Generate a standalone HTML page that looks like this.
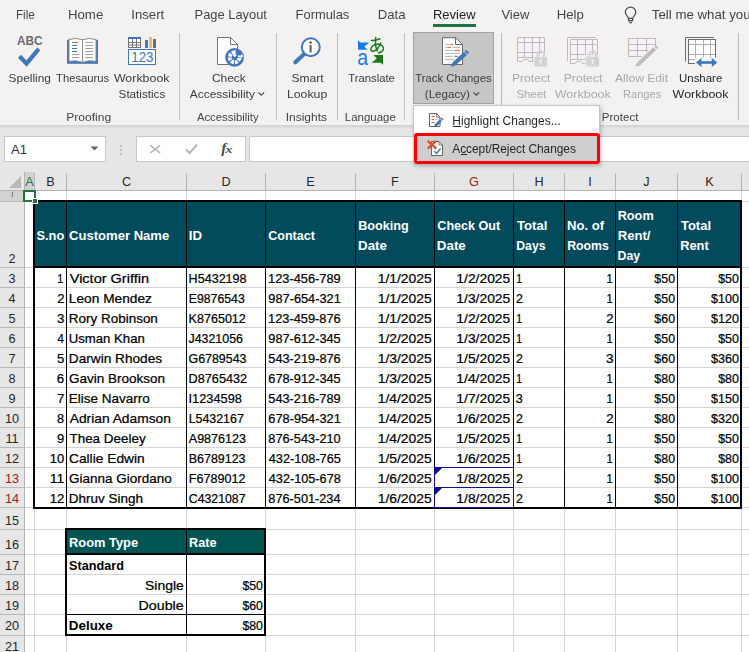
<!DOCTYPE html>
<html><head><meta charset="utf-8"><title>Excel</title>
<style>
*{box-sizing:border-box;margin:0;padding:0}
html,body{width:749px;height:652px;overflow:hidden}
body{position:relative;background:#f3f2f1;font-family:"Liberation Sans",sans-serif;color:#262626}
.abs{position:absolute}
.sep{position:absolute;top:33px;width:1px;height:87px;background:#bcbcbc}
.ch{position:absolute;top:172px;height:18px;font-size:12.700px;line-height:20px;text-align:center;color:#262626}
.rh{position:absolute;left:0;width:24px;font-size:12.700px;text-align:center;color:#262626;line-height:14px;height:14px}
.vl{position:absolute;width:1px;background:#d4d4d4}
.hl{position:absolute;height:1px;background:#d4d4d4}
.bk{position:absolute;background:#000}
</style></head><body>

<div class="abs" style="left:0;top:0;width:749px;height:126px;background:#f3f2f1"></div>
<div class="abs" style="left:0;top:125px;width:749px;height:4px;background:linear-gradient(#d0d0d0,#e6e6e6)"></div>
<div class="abs" style="left:0;top:129px;width:749px;height:43px;background:#e6e6e6"></div>
<svg class="abs" style="left:0;top:0;z-index:5;will-change:transform" width="749" height="130" viewBox="0 0 749 130" font-family="Liberation Sans">
<text x="15.9" y="19" font-size="13.1" fill="#444" font-weight="normal" textLength="18.9" lengthAdjust="spacingAndGlyphs">File</text>
<text x="67.9" y="19" font-size="13.1" fill="#444" font-weight="normal" textLength="35.4" lengthAdjust="spacingAndGlyphs">Home</text>
<text x="131.3" y="19" font-size="13.1" fill="#444" font-weight="normal" textLength="32.9" lengthAdjust="spacingAndGlyphs">Insert</text>
<text x="194.6" y="19" font-size="13.1" fill="#444" font-weight="normal" textLength="72.3" lengthAdjust="spacingAndGlyphs">Page Layout</text>
<text x="295.6" y="19" font-size="13.1" fill="#444" font-weight="normal" textLength="53.7" lengthAdjust="spacingAndGlyphs">Formulas</text>
<text x="377.7" y="19" font-size="13.1" fill="#444" font-weight="normal" textLength="27.8" lengthAdjust="spacingAndGlyphs">Data</text>
<text x="433.0" y="19" font-size="13.1" fill="#222" font-weight="normal" textLength="42.5" lengthAdjust="spacingAndGlyphs">Review</text>
<text x="501.4" y="19" font-size="13.1" fill="#444" font-weight="normal" textLength="27.9" lengthAdjust="spacingAndGlyphs">View</text>
<text x="556.7" y="19" font-size="13.1" fill="#444" font-weight="normal" textLength="27.1" lengthAdjust="spacingAndGlyphs">Help</text>
<text x="651.8" y="19" font-size="13.1" fill="#444" font-weight="normal" textLength="98.8" lengthAdjust="spacingAndGlyphs">Tell me what you</text>
<text x="8.6" y="82" font-size="11.6" fill="#3b3b3b" font-weight="normal" textLength="42.4" lengthAdjust="spacingAndGlyphs">Spelling</text>
<text x="56.1" y="82" font-size="11.6" fill="#3b3b3b" font-weight="normal" textLength="53.0" lengthAdjust="spacingAndGlyphs">Thesaurus</text>
<text x="113.9" y="82" font-size="11.6" fill="#3b3b3b" font-weight="normal" textLength="55.6" lengthAdjust="spacingAndGlyphs">Workbook</text>
<text x="118.6" y="98" font-size="11.6" fill="#3b3b3b" font-weight="normal" textLength="46.7" lengthAdjust="spacingAndGlyphs">Statistics</text>
<text x="211.9" y="82" font-size="11.6" fill="#3b3b3b" font-weight="normal" textLength="33.8" lengthAdjust="spacingAndGlyphs">Check</text>
<text x="189.7" y="98" font-size="11.6" fill="#3b3b3b" font-weight="normal" textLength="65.2" lengthAdjust="spacingAndGlyphs">Accessibility</text>
<text x="291.4" y="82" font-size="11.6" fill="#3b3b3b" font-weight="normal" textLength="32.2" lengthAdjust="spacingAndGlyphs">Smart</text>
<text x="286.9" y="98" font-size="11.6" fill="#3b3b3b" font-weight="normal" textLength="40.4" lengthAdjust="spacingAndGlyphs">Lookup</text>
<text x="348.2" y="82" font-size="11.6" fill="#3b3b3b" font-weight="normal" textLength="46.7" lengthAdjust="spacingAndGlyphs">Translate</text>
<text x="415.3" y="82" font-size="11.6" fill="#3b3b3b" font-weight="normal" textLength="76.3" lengthAdjust="spacingAndGlyphs">Track Changes</text>
<text x="424.8" y="98" font-size="11.6" fill="#3b3b3b" font-weight="normal" textLength="45.1" lengthAdjust="spacingAndGlyphs">(Legacy)</text>
<text x="511.9" y="82" font-size="11.6" fill="#a9a9a9" font-weight="normal" textLength="38.5" lengthAdjust="spacingAndGlyphs">Protect</text>
<text x="516.4" y="98" font-size="11.6" fill="#a9a9a9" font-weight="normal" textLength="29.8" lengthAdjust="spacingAndGlyphs">Sheet</text>
<text x="563.7" y="82" font-size="11.6" fill="#a9a9a9" font-weight="normal" textLength="38.7" lengthAdjust="spacingAndGlyphs">Protect</text>
<text x="554.8" y="98" font-size="11.6" fill="#a9a9a9" font-weight="normal" textLength="56.0" lengthAdjust="spacingAndGlyphs">Workbook</text>
<text x="614.9" y="82" font-size="11.6" fill="#a9a9a9" font-weight="normal" textLength="53.3" lengthAdjust="spacingAndGlyphs">Allow Edit</text>
<text x="622.9" y="98" font-size="11.6" fill="#a9a9a9" font-weight="normal" textLength="38.4" lengthAdjust="spacingAndGlyphs">Ranges</text>
<text x="679.0" y="82" font-size="11.6" fill="#262626" font-weight="normal" textLength="43.3" lengthAdjust="spacingAndGlyphs">Unshare</text>
<text x="672.6" y="98" font-size="11.6" fill="#262626" font-weight="normal" textLength="55.9" lengthAdjust="spacingAndGlyphs">Workbook</text>
<text x="66.2" y="121" font-size="11.6" fill="#444" font-weight="normal" textLength="44.9" lengthAdjust="spacingAndGlyphs">Proofing</text>
<text x="196.9" y="121" font-size="11.6" fill="#444" font-weight="normal" textLength="61.7" lengthAdjust="spacingAndGlyphs">Accessibility</text>
<text x="285.7" y="121" font-size="11.6" fill="#444" font-weight="normal" textLength="41.3" lengthAdjust="spacingAndGlyphs">Insights</text>
<text x="344.8" y="121" font-size="11.6" fill="#444" font-weight="normal" textLength="51.0" lengthAdjust="spacingAndGlyphs">Language</text>
<text x="601.8" y="121" font-size="11.6" fill="#444" font-weight="normal" textLength="36.6" lengthAdjust="spacingAndGlyphs">Protect</text>
<path d="M258.5 92.300L261.3 95.100L264.1 92.300" fill="none" stroke="#444" stroke-width="1.100"/>
<path d="M473.5 92.300L476.3 95.100L479.1 92.300" fill="none" stroke="#444" stroke-width="1.100"/>
</svg>
<div class="abs" style="left:433px;top:24px;width:43px;height:2.500px;background:#217346"></div>
<svg class="abs" style="left:620px;top:0px" width="22" height="28" viewBox="620 0 22 28"><path d="M628.500 18.400C628.500 16.300 625.300 15.600 625.300 12.300A5.250 5.250 0 0 1 635.800 12.300C635.800 15.600 632.700 16.300 632.700 18.400z M628.500 18.400V20.700H632.700V18.400 M629.200 22.500H631.900" fill="none" stroke="#484848" stroke-width="1.250"/></svg>
<div class="sep" style="left:179px"></div>
<div class="sep" style="left:276px"></div>
<div class="sep" style="left:337px"></div>
<div class="sep" style="left:404px"></div>
<div class="sep" style="left:501px"></div>
<div class="sep" style="left:738px"></div>
<div class="abs" style="left:413px;top:32px;width:81px;height:72px;background:#c8c6c4;border:1px solid #a3a3a3"></div>
<svg class="abs" style="left:0;top:0" width="749" height="130" viewBox="0 0 749 130">
<text x="17" y="45.2" font-family="Liberation Sans" font-size="12.6" font-weight="bold" fill="#6b6b6b" textLength="25.5" lengthAdjust="spacingAndGlyphs">ABC</text>
<path d="M19.500 56.300L26.500 63.500L38.800 48.800" fill="none" stroke="#3e78b8" stroke-width="4.200"/>
<rect x="67" y="39.8" width="31" height="24" fill="#3e78b8"/>
<path d="M69 39.5Q76 37.2 82.500 39.8Q89 37.2 96 39.500V61.300Q89 59.800 82.500 62.300Q76 59.800 69 61.300z" fill="#fff" stroke="#8a8a8a" stroke-width="1"/>
<path d="M82.500 39.800V62" stroke="#8a8a8a" stroke-width="1"/>
<path d="M72 42.4h6" stroke="#d9532c" stroke-width="1"/>
<path d="M85.300 42.4h7.500" stroke="#9a9a9a" stroke-width="1"/>
<path d="M72 45.4h5" stroke="#3e78b8" stroke-width="1"/>
<path d="M85.300 45.4h7.500" stroke="#9a9a9a" stroke-width="1"/>
<path d="M72 48.5h5" stroke="#3e78b8" stroke-width="1"/>
<path d="M85.300 48.5h7.500" stroke="#9a9a9a" stroke-width="1"/>
<path d="M72 51.5h5" stroke="#3e78b8" stroke-width="1"/>
<path d="M85.300 51.5h7.500" stroke="#9a9a9a" stroke-width="1"/>
<path d="M72 54.6h7.4" stroke="#9a9a9a" stroke-width="1"/>
<path d="M85.300 54.6h7.500" stroke="#9a9a9a" stroke-width="1"/>
<path d="M72 57.6h7.4" stroke="#9a9a9a" stroke-width="1"/>
<path d="M85.300 57.6h7.500" stroke="#9a9a9a" stroke-width="1"/>
<rect x="128.500" y="37.500" width="12" height="10" fill="#fff" stroke="#777" stroke-width="1"/>
<rect x="128" y="37" width="13" height="2" fill="#3e78b8"/>
<path d="M128 42.500h13M128 45h13M132.500 39v9M136.500 39v9" stroke="#777" stroke-width="1" fill="none"/>
<rect x="145" y="40" width="3" height="8" fill="#3e78b8"/>
<rect x="149" y="37" width="3" height="11" fill="#e9b96e"/>
<rect x="153" y="39" width="3" height="9" fill="#6b6b6b"/>
<rect x="128.500" y="49.500" width="27" height="15" fill="#fff" stroke="#3e78b8" stroke-width="1"/>
<text x="131.300" y="62" font-family="Liberation Sans" font-size="13.800" fill="#3e78b8" textLength="22.200" lengthAdjust="spacingAndGlyphs">123</text>
<path d="M217.500 37.500H230.500L237.500 44.500V64.500H217.500z" fill="#fff" stroke="#727272" stroke-width="1"/>
<path d="M230.500 37.500V44.500H237.500" fill="none" stroke="#727272" stroke-width="1"/>
<circle cx="234.600" cy="57.400" r="9.400" fill="#3e78b8"/>
<circle cx="234.600" cy="57.400" r="4.900" fill="none" stroke="#fff" stroke-width="3.800" stroke-dasharray="2.850 0.998" stroke-dashoffset="-0.500"/>
<path d="M234.600 57.400V49.400A8 8 0 0 1 242.600 57.400z" fill="#3e78b8"/>
<circle cx="234.600" cy="57.400" r="2.600" fill="#3e78b8"/>
<path d="M234.700 50.300V55.500" stroke="#fff" stroke-width="2"/><path d="M232.400 54.800H237L234.700 57.300z" fill="#fff"/>
<path d="M238 56.300H241.500" stroke="#fff" stroke-width="1.600"/><path d="M241 53.800V58.800L243.500 56.300z" fill="#fff"/>
<path d="M304.500 53.800L295.300 62.300" stroke="#3e78b8" stroke-width="4" stroke-linecap="round"/>
<circle cx="310.800" cy="47.200" r="9" fill="#fff" stroke="#3e78b8" stroke-width="2"/>
<circle cx="310.600" cy="42.600" r="1.300" fill="#5a5a5a"/>
<path d="M310.600 45V52.300" stroke="#5a5a5a" stroke-width="2"/>
<path d="M358 40.300V49.800H367.700L364.300 46.400L369.400 42.500H360.500z" fill="#1a7ae0"/>
<text x="357.300" y="64.500" font-family="Liberation Sans" font-size="22.500" fill="#1a7ae0" textLength="10.800" lengthAdjust="spacingAndGlyphs">a</text>
<path d="M383 64.700V55H373.400L376.800 58.600L371.400 62.700H380.600z" fill="#1a7a1a"/>
<g fill="none" stroke="#1a7a1a" stroke-width="1.500" stroke-linecap="round"><path d="M371.300 40.400Q375.500 40.800 380 38.800"/><path d="M375.800 37.400Q374.600 45 377.200 51"/><path d="M380.600 43Q378.500 49.500 373.500 51.300Q370.500 51.800 371 48.500Q372.500 44 378.500 44.300Q384.300 45.500 383.300 49.500Q382 52.500 378.500 53"/></g>
<path d="M442.500 37.700H455.500L462.500 44.500V64.500H442.500z" fill="#fff" stroke="#666" stroke-width="1"/>
<path d="M455.500 37.700V44.500H462.500" fill="none" stroke="#666" stroke-width="1"/>
<path d="M445 44.4H449" stroke="#a8a8a8" stroke-width="0.900"/>
<path d="M450 44.4H453" stroke="#d9532c" stroke-width="0.900"/>
<path d="M445 47.4H446" stroke="#a8a8a8" stroke-width="0.900"/>
<path d="M447 47.4H451" stroke="#d9532c" stroke-width="0.900"/>
<path d="M452.2 47.4H460" stroke="#a8a8a8" stroke-width="0.900"/>
<path d="M445 50.4H453" stroke="#a8a8a8" stroke-width="0.900"/>
<path d="M454.2 50.4H460" stroke="#d9532c" stroke-width="0.900"/>
<path d="M445 53.4H460" stroke="#a8a8a8" stroke-width="0.900"/>
<path d="M445 56.4H453" stroke="#a8a8a8" stroke-width="0.900"/>
<path d="M454.2 56.4H458" stroke="#d9532c" stroke-width="0.900"/>
<path d="M445 59.4H454" stroke="#a8a8a8" stroke-width="0.900"/>
<path d="M453.600 64.200L465.500 53.400" stroke="#3e78b8" stroke-width="4.200"/>
<path d="M466.200 52.700L467.700 51.300" stroke="#3e78b8" stroke-width="4.200"/>
<path d="M450.800 66.800L452.100 62.700L454.900 65.700z" fill="#3e78b8"/>
<path d="M517.500 37.500H544.500V61.500H529.500L528 59.500H523.500L522 61.500H517.500z" fill="#f6f2f7" stroke="#bdb9bd" stroke-width="1"/>
<path d="M524.500 37.500V58M532.500 37.500V61M539.500 37.500V61M517.500 42.500H544.500M517.500 52.500H544.500M517.500 57.500H544.500" stroke="#bdb9bd" stroke-width="1" fill="none"/>
<rect x="533.3" y="54.5" width="15" height="13" fill="#f3f2f1"/>
<path d="M537.5 57.5V54.5a3.200 3.200 0 0 1 6.400 0V57.5" fill="none" stroke="#d3d3d3" stroke-width="2"/>
<rect x="534.3" y="57.0" width="12.800" height="9.500" rx="1" fill="#d3d3d3"/>
<circle cx="540.6999999999999" cy="60.5" r="1.200" fill="#f3f2f1"/><path d="M540.6999999999999 60.5V64.0" stroke="#f3f2f1" stroke-width="1.200"/>
<path d="M567.500 61.500V37.500H596" fill="none" stroke="#bdb9bd" stroke-width="1"/>
<path d="M570.500 39.500H597.500V63.500H582.500L581 61.500H576.500L575 63.500H570.500z" fill="#f6f2f7" stroke="#bdb9bd" stroke-width="1"/>
<path d="M577.500 39.500V60M585.500 39.500V63M592.500 39.500V63M570.500 44.500H597.500M570.500 54.500H597.500M570.500 59.500H597.500" stroke="#bdb9bd" stroke-width="1" fill="none"/>
<rect x="585.3" y="54.5" width="15" height="13" fill="#f3f2f1"/>
<path d="M589.5 57.5V54.5a3.200 3.200 0 0 1 6.400 0V57.5" fill="none" stroke="#d3d3d3" stroke-width="2"/>
<rect x="586.3" y="57.0" width="12.800" height="9.500" rx="1" fill="#d3d3d3"/>
<circle cx="592.6999999999999" cy="60.5" r="1.200" fill="#f3f2f1"/><path d="M592.6999999999999 60.5V64.0" stroke="#f3f2f1" stroke-width="1.200"/>
<rect x="628.500" y="38.500" width="27" height="18" fill="#f6f2f7" stroke="#bdb9bd" stroke-width="1"/>
<path d="M637.500 38.500V56.500M646.500 38.500V56.500M628.500 44.500H655.500M628.500 50.500H655.500" stroke="#bdb9bd" stroke-width="1" fill="none"/>
<path d="M637 65.500L655.500 47.800" stroke="#f3f2f1" stroke-width="6.500"/>
<path d="M657.500 46.500V58H644z" fill="#f3f2f1"/>
<path d="M638.800 63.800L654.700 48.600" stroke="#bcbcbc" stroke-width="4"/>
<path d="M655.600 47.700L657 46.400" stroke="#bcbcbc" stroke-width="4"/>
<path d="M635.600 66.700L637.100 62.200L640.300 65.400z" fill="#bcbcbc"/>
<path d="M685.500 61.500V37.500H714" fill="none" stroke="#6e6e6e" stroke-width="1"/>
<rect x="688.500" y="39.500" width="27" height="24" fill="#fff" stroke="#6e6e6e" stroke-width="1"/>
<path d="M695.500 40V63M703.500 40V63M710.500 40V63M689 44.500H715M689 54.500H715M689 59.500H715" stroke="#b0b0b0" stroke-width="1" fill="none"/>
<rect x="695" y="57.500" width="23" height="10" fill="#f3f2f1"/>
<path d="M696 62.500L701.500 58V67zM717.300 62.500L711.800 58V67z" fill="#3e78b8"/><path d="M700 62.500H714" stroke="#3e78b8" stroke-width="2.600"/>
</svg>
<div class="abs" style="left:0;top:0;z-index:50">
<div class="abs" style="left:413px;top:105px;width:187px;height:59px;background:#fff;border:1px solid #c6c6c6;box-shadow:1px 2px 4px rgba(0,0,0,.25)"></div>
<div class="abs" style="left:414px;top:133px;width:186px;height:31px;background:#d0cecc;border:3px solid #ff0000;border-radius:3px"></div>
<svg class="abs" style="left:440px;top:105px" width="170" height="60" viewBox="440 105 170 60" font-family="Liberation Sans" font-size="11.900" fill="#262626"><text x="452.300" y="125" textLength="108.500" lengthAdjust="spacing">Highlight Changes...</text><text x="452.300" y="153" textLength="123.600" lengthAdjust="spacing">Accept/Reject Changes</text><path d="M452.800 126.500H461.300M461 154.500H467" stroke="#262626" stroke-width="1"/></svg>
<svg class="abs" style="left:410px;top:104px" width="60" height="60" viewBox="410 104 60 60">
<path d="M429.500 113.500H436.500L440 117V126.500H429.500z" fill="#fff" stroke="#666" stroke-width="1"/>
<path d="M436.500 113.500V117H440" fill="none" stroke="#666" stroke-width="0.900"/>
<path d="M431.500 116.500h3M431.500 119.500h2.500M431.500 122.500h3" stroke="#d9532c" stroke-width="0.900"/>
<path d="M435.500 119.500h2" stroke="#aaa" stroke-width="0.900"/>
<path d="M434 127.300L435 124L437.300 126.300z" fill="#3e78b8"/>
<path d="M435.800 125.500L441 120.100" stroke="#3e78b8" stroke-width="2.800"/><path d="M441.700 119.400L442.700 118.400" stroke="#3e78b8" stroke-width="2.800"/>
<path d="M431.500 141.500H439L442.500 145V155.500H431.500z" fill="#fff" stroke="#666" stroke-width="1"/>
<path d="M439 141.500V145H442.500" fill="none" stroke="#666" stroke-width="0.900"/>
<path d="M427.800 140.800L436.300 148.700M436.300 140.800L427.800 148.700" stroke="#d9532c" stroke-width="2.400"/>
<path d="M434.300 151.300L436.700 153.400L440.600 148.500" fill="none" stroke="#3e78b8" stroke-width="1.400"/>
</svg>
</div>
<div class="abs" style="left:4px;top:136px;width:102px;height:26px;background:#fff;border:1px solid #c8c8c8"></div>
<div class="abs" style="left:11px;top:142px;font-size:13px;color:#333">A1</div>
<svg class="abs" style="left:90px;top:146px" width="9" height="5"><path d="M0.500 0.500h8L4.500 4.500z" fill="#666"/></svg>
<div class="abs" style="left:120px;top:145px;width:2px;height:2px;background:#bdbdbd"></div>
<div class="abs" style="left:120px;top:149px;width:2px;height:2px;background:#bdbdbd"></div>
<div class="abs" style="left:120px;top:153px;width:2px;height:2px;background:#bdbdbd"></div>
<div class="abs" style="left:136px;top:136px;width:110px;height:26px;background:#fff;border:1px solid #c8c8c8"></div>
<svg class="abs" style="left:140px;top:138px" width="104" height="22" viewBox="140 138 104 22"><path d="M150.200 145.300L160.200 153M160.200 145.300L150.200 153" stroke="#b4b4b4" stroke-width="1.500" fill="none"/><path d="M185.800 149.300L189.600 153.200L197 144.600" stroke="#b4b4b4" stroke-width="1.900" fill="none"/><text x="221.200" y="152.600" font-family="Liberation Serif" font-style="italic" font-weight="bold" font-size="15.500" fill="#4d4d4d">f</text><text x="225.600" y="153.400" font-family="Liberation Serif" font-style="italic" font-weight="bold" font-size="10.500" fill="#4d4d4d" textLength="7" lengthAdjust="spacingAndGlyphs">x</text></svg>
<div class="abs" style="left:249px;top:136px;width:510px;height:26px;background:#fff;border:1px solid #c8c8c8"></div>
<div class="abs" style="left:0;top:172px;width:749px;height:19px;background:#e6e6e6"></div>
<div class="abs" style="left:0;top:190px;width:24px;height:462px;background:#e6e6e6"></div>
<div class="abs" style="left:25px;top:190px;width:724px;height:462px;background:#fff"></div>
<div class="abs" style="left:25px;top:172px;width:9px;height:18px;background:#d2d2d2"></div>
<div class="abs" style="left:0;top:191px;width:24px;height:10px;background:#d2d2d2"></div>
<svg class="abs" style="left:8px;top:175px" width="14" height="14"><path d="M13 1V13H1z" fill="#b8b8b8"/></svg>
<div class="vl" style="left:34px;top:190px;height:462px"></div>
<div class="abs" style="left:34px;top:173px;width:1px;height:17px;background:#b4b4b4"></div>
<div class="vl" style="left:66px;top:190px;height:462px"></div>
<div class="abs" style="left:66px;top:173px;width:1px;height:17px;background:#b4b4b4"></div>
<div class="vl" style="left:186px;top:190px;height:462px"></div>
<div class="abs" style="left:186px;top:173px;width:1px;height:17px;background:#b4b4b4"></div>
<div class="vl" style="left:265px;top:190px;height:462px"></div>
<div class="abs" style="left:265px;top:173px;width:1px;height:17px;background:#b4b4b4"></div>
<div class="vl" style="left:355px;top:190px;height:462px"></div>
<div class="abs" style="left:355px;top:173px;width:1px;height:17px;background:#b4b4b4"></div>
<div class="vl" style="left:434px;top:190px;height:462px"></div>
<div class="abs" style="left:434px;top:173px;width:1px;height:17px;background:#b4b4b4"></div>
<div class="vl" style="left:513px;top:190px;height:462px"></div>
<div class="abs" style="left:513px;top:173px;width:1px;height:17px;background:#b4b4b4"></div>
<div class="vl" style="left:564px;top:190px;height:462px"></div>
<div class="abs" style="left:564px;top:173px;width:1px;height:17px;background:#b4b4b4"></div>
<div class="vl" style="left:615px;top:190px;height:462px"></div>
<div class="abs" style="left:615px;top:173px;width:1px;height:17px;background:#b4b4b4"></div>
<div class="vl" style="left:677px;top:190px;height:462px"></div>
<div class="abs" style="left:677px;top:173px;width:1px;height:17px;background:#b4b4b4"></div>
<div class="vl" style="left:741px;top:190px;height:462px"></div>
<div class="abs" style="left:741px;top:173px;width:1px;height:17px;background:#b4b4b4"></div>
<div class="vl" style="left:760px;top:190px;height:462px"></div>
<div class="abs" style="left:760px;top:173px;width:1px;height:17px;background:#b4b4b4"></div>
<div class="hl" style="left:25px;top:201px;width:724px"></div>
<div class="abs" style="left:0;top:201px;width:24px;height:1px;background:#b9b9b9"></div>
<div class="hl" style="left:25px;top:267px;width:724px"></div>
<div class="abs" style="left:0;top:267px;width:24px;height:1px;background:#b9b9b9"></div>
<div class="hl" style="left:25px;top:287px;width:724px"></div>
<div class="abs" style="left:0;top:287px;width:24px;height:1px;background:#b9b9b9"></div>
<div class="hl" style="left:25px;top:307px;width:724px"></div>
<div class="abs" style="left:0;top:307px;width:24px;height:1px;background:#b9b9b9"></div>
<div class="hl" style="left:25px;top:327px;width:724px"></div>
<div class="abs" style="left:0;top:327px;width:24px;height:1px;background:#b9b9b9"></div>
<div class="hl" style="left:25px;top:347px;width:724px"></div>
<div class="abs" style="left:0;top:347px;width:24px;height:1px;background:#b9b9b9"></div>
<div class="hl" style="left:25px;top:367px;width:724px"></div>
<div class="abs" style="left:0;top:367px;width:24px;height:1px;background:#b9b9b9"></div>
<div class="hl" style="left:25px;top:387px;width:724px"></div>
<div class="abs" style="left:0;top:387px;width:24px;height:1px;background:#b9b9b9"></div>
<div class="hl" style="left:25px;top:407px;width:724px"></div>
<div class="abs" style="left:0;top:407px;width:24px;height:1px;background:#b9b9b9"></div>
<div class="hl" style="left:25px;top:427px;width:724px"></div>
<div class="abs" style="left:0;top:427px;width:24px;height:1px;background:#b9b9b9"></div>
<div class="hl" style="left:25px;top:447px;width:724px"></div>
<div class="abs" style="left:0;top:447px;width:24px;height:1px;background:#b9b9b9"></div>
<div class="hl" style="left:25px;top:467px;width:724px"></div>
<div class="abs" style="left:0;top:467px;width:24px;height:1px;background:#b9b9b9"></div>
<div class="hl" style="left:25px;top:487px;width:724px"></div>
<div class="abs" style="left:0;top:487px;width:24px;height:1px;background:#b9b9b9"></div>
<div class="hl" style="left:25px;top:507px;width:724px"></div>
<div class="abs" style="left:0;top:507px;width:24px;height:1px;background:#b9b9b9"></div>
<div class="hl" style="left:25px;top:529px;width:724px"></div>
<div class="abs" style="left:0;top:529px;width:24px;height:1px;background:#b9b9b9"></div>
<div class="hl" style="left:25px;top:554px;width:724px"></div>
<div class="abs" style="left:0;top:554px;width:24px;height:1px;background:#b9b9b9"></div>
<div class="hl" style="left:25px;top:574px;width:724px"></div>
<div class="abs" style="left:0;top:574px;width:24px;height:1px;background:#b9b9b9"></div>
<div class="hl" style="left:25px;top:594px;width:724px"></div>
<div class="abs" style="left:0;top:594px;width:24px;height:1px;background:#b9b9b9"></div>
<div class="hl" style="left:25px;top:614px;width:724px"></div>
<div class="abs" style="left:0;top:614px;width:24px;height:1px;background:#b9b9b9"></div>
<div class="hl" style="left:25px;top:635px;width:724px"></div>
<div class="abs" style="left:0;top:635px;width:24px;height:1px;background:#b9b9b9"></div>
<div class="hl" style="left:25px;top:655px;width:724px"></div>
<div class="abs" style="left:0;top:655px;width:24px;height:1px;background:#b9b9b9"></div>
<div class="abs" style="left:24px;top:172px;width:1px;height:480px;background:#b4b4b4"></div>
<div class="abs" style="left:0;top:190px;width:749px;height:1px;background:#b4b4b4"></div>
<div class="ch" style="left:25px;width:9px;color:#217346">A</div>
<div class="ch" style="left:35px;width:31px;color:#262626">B</div>
<div class="ch" style="left:67px;width:119px;color:#262626">C</div>
<div class="ch" style="left:187px;width:78px;color:#262626">D</div>
<div class="ch" style="left:266px;width:89px;color:#262626">E</div>
<div class="ch" style="left:356px;width:78px;color:#262626">F</div>
<div class="ch" style="left:435px;width:78px;color:#9c1c1c">G</div>
<div class="ch" style="left:514px;width:50px;color:#262626">H</div>
<div class="ch" style="left:565px;width:50px;color:#262626">I</div>
<div class="ch" style="left:616px;width:61px;color:#262626">J</div>
<div class="ch" style="left:678px;width:63px;color:#262626">K</div>
<div class="abs" style="left:11.500px;top:192px;width:1.400px;height:4.500px;background:#5d8a6c"></div>
<div class="rh" style="top:252px;color:#262626">2</div>
<div class="rh" style="top:272px;color:#262626">3</div>
<div class="rh" style="top:292px;color:#262626">4</div>
<div class="rh" style="top:312px;color:#262626">5</div>
<div class="rh" style="top:332px;color:#262626">6</div>
<div class="rh" style="top:352px;color:#262626">7</div>
<div class="rh" style="top:372px;color:#262626">8</div>
<div class="rh" style="top:392px;color:#262626">9</div>
<div class="rh" style="top:412px;color:#262626">10</div>
<div class="rh" style="top:432px;color:#262626">11</div>
<div class="rh" style="top:452px;color:#262626">12</div>
<div class="rh" style="top:472px;color:#9c1c1c">13</div>
<div class="rh" style="top:492px;color:#9c1c1c">14</div>
<div class="rh" style="top:514px;color:#262626">15</div>
<div class="rh" style="top:538px;color:#262626">16</div>
<div class="rh" style="top:559px;color:#262626">17</div>
<div class="rh" style="top:579px;color:#262626">18</div>
<div class="rh" style="top:599px;color:#262626">19</div>
<div class="rh" style="top:619px;color:#262626">20</div>
<div class="rh" style="top:640px;color:#262626">21</div>
<div class="abs" style="left:35px;top:202px;width:706px;height:65px;background:#024b5c"></div>
<div class="bk" style="left:66px;top:201px;width:1px;height:306px"></div>
<div class="bk" style="left:186px;top:201px;width:1px;height:306px"></div>
<div class="bk" style="left:265px;top:201px;width:1px;height:306px"></div>
<div class="bk" style="left:355px;top:201px;width:1px;height:306px"></div>
<div class="bk" style="left:434px;top:201px;width:1px;height:306px"></div>
<div class="bk" style="left:513px;top:201px;width:1px;height:306px"></div>
<div class="bk" style="left:564px;top:201px;width:1px;height:306px"></div>
<div class="bk" style="left:615px;top:201px;width:1px;height:306px"></div>
<div class="bk" style="left:677px;top:201px;width:1px;height:306px"></div>
<div class="bk" style="left:33px;top:200px;width:2px;height:309px"></div>
<div class="bk" style="left:740px;top:200px;width:2px;height:309px"></div>
<div class="bk" style="left:33px;top:200px;width:709px;height:2px"></div>
<div class="bk" style="left:33px;top:266px;width:709px;height:2px"></div>
<div class="bk" style="left:33px;top:507px;width:709px;height:2px"></div>
<div class="abs" style="left:434px;top:467px;width:80px;height:21px;border:1px solid #10108a"></div>
<svg class="abs" style="left:435px;top:468px" width="7" height="7"><path d="M0 0H7L0 7z" fill="#10108a"/></svg>
<div class="abs" style="left:434px;top:487px;width:80px;height:21px;border:1px solid #10108a"></div>
<svg class="abs" style="left:435px;top:488px" width="7" height="7"><path d="M0 0H7L0 7z" fill="#10108a"/></svg>
<div class="abs" style="left:23px;top:190px;width:13px;height:12px;border:2px solid #217346"></div>
<div class="abs" style="left:32px;top:198px;width:6px;height:6px;background:#217346;border:1px solid #fff"></div>
<div class="abs" style="left:67px;top:530px;width:198px;height:24px;background:#015654"></div>
<div class="bk" style="left:65px;top:528px;width:2px;height:108px"></div>
<div class="bk" style="left:264px;top:528px;width:2px;height:108px"></div>
<div class="bk" style="left:65px;top:528px;width:201px;height:2px"></div>
<div class="bk" style="left:65px;top:634px;width:201px;height:2px"></div>
<div class="bk" style="left:186px;top:529px;width:1px;height:106px"></div>
<div class="bk" style="left:66px;top:553px;width:199px;height:2px"></div>
<div class="bk" style="left:66px;top:614px;width:199px;height:1px"></div>
<svg class="abs" style="left:0;top:172px;z-index:3" width="749" height="480" viewBox="0 172 749 480" font-family="Liberation Sans" font-size="12.700">
<text x="57.27" y="283" fill="#000" stroke="#000" stroke-width="0.220" textLength="6.01" lengthAdjust="spacingAndGlyphs">1</text>
<text x="69.73" y="283" fill="#000" stroke="#000" stroke-width="0.220" textLength="79.31" lengthAdjust="spacingAndGlyphs">Victor Griffin</text>
<text x="188.62" y="283" fill="#000" stroke="#000" stroke-width="0.220" textLength="57.96" lengthAdjust="spacingAndGlyphs">H5432198</text>
<text x="268.02" y="283" fill="#000" stroke="#000" stroke-width="0.220" textLength="72.65" lengthAdjust="spacingAndGlyphs">123-456-789</text>
<text x="377.74" y="283" fill="#000" stroke="#000" stroke-width="0.220" textLength="53.97" lengthAdjust="spacingAndGlyphs">1/1/2025</text>
<text x="456.37" y="283" fill="#000" stroke="#000" stroke-width="0.220" textLength="53.87" lengthAdjust="spacingAndGlyphs">1/2/2025</text>
<text x="516.30" y="283" fill="#000" stroke="#000" stroke-width="0.220" textLength="5.81" lengthAdjust="spacingAndGlyphs">1</text>
<text x="606.61" y="283" fill="#000" stroke="#000" stroke-width="0.220" textLength="6.18" lengthAdjust="spacingAndGlyphs">1</text>
<text x="654.36" y="283" fill="#000" stroke="#000" stroke-width="0.220" textLength="20.67" lengthAdjust="spacingAndGlyphs">$50</text>
<text x="718.21" y="283" fill="#000" stroke="#000" stroke-width="0.220" textLength="20.71" lengthAdjust="spacingAndGlyphs">$50</text>
<text x="57.16" y="303" fill="#000" stroke="#000" stroke-width="0.220" textLength="7.20" lengthAdjust="spacingAndGlyphs">2</text>
<text x="68.86" y="303" fill="#000" stroke="#000" stroke-width="0.220" textLength="83.04" lengthAdjust="spacingAndGlyphs">Leon Mendez</text>
<text x="188.76" y="303" fill="#000" stroke="#000" stroke-width="0.220" textLength="56.01" lengthAdjust="spacingAndGlyphs">E9876543</text>
<text x="268.34" y="303" fill="#000" stroke="#000" stroke-width="0.220" textLength="72.42" lengthAdjust="spacingAndGlyphs">987-654-321</text>
<text x="377.74" y="303" fill="#000" stroke="#000" stroke-width="0.220" textLength="53.97" lengthAdjust="spacingAndGlyphs">1/1/2025</text>
<text x="456.37" y="303" fill="#000" stroke="#000" stroke-width="0.220" textLength="53.87" lengthAdjust="spacingAndGlyphs">1/3/2025</text>
<text x="516.08" y="303" fill="#000" stroke="#000" stroke-width="0.220" textLength="6.94" lengthAdjust="spacingAndGlyphs">2</text>
<text x="606.61" y="303" fill="#000" stroke="#000" stroke-width="0.220" textLength="6.18" lengthAdjust="spacingAndGlyphs">1</text>
<text x="654.36" y="303" fill="#000" stroke="#000" stroke-width="0.220" textLength="20.67" lengthAdjust="spacingAndGlyphs">$50</text>
<text x="711.05" y="303" fill="#000" stroke="#000" stroke-width="0.220" textLength="27.97" lengthAdjust="spacingAndGlyphs">$100</text>
<text x="56.91" y="323" fill="#000" stroke="#000" stroke-width="0.220" textLength="7.43" lengthAdjust="spacingAndGlyphs">3</text>
<text x="68.88" y="323" fill="#000" stroke="#000" stroke-width="0.220" textLength="88.97" lengthAdjust="spacingAndGlyphs">Rory Robinson</text>
<text x="188.62" y="323" fill="#000" stroke="#000" stroke-width="0.220" textLength="57.22" lengthAdjust="spacingAndGlyphs">K8765012</text>
<text x="268.02" y="323" fill="#000" stroke="#000" stroke-width="0.220" textLength="72.66" lengthAdjust="spacingAndGlyphs">123-459-876</text>
<text x="377.74" y="323" fill="#000" stroke="#000" stroke-width="0.220" textLength="53.97" lengthAdjust="spacingAndGlyphs">1/1/2025</text>
<text x="456.37" y="323" fill="#000" stroke="#000" stroke-width="0.220" textLength="53.87" lengthAdjust="spacingAndGlyphs">1/2/2025</text>
<text x="516.30" y="323" fill="#000" stroke="#000" stroke-width="0.220" textLength="5.81" lengthAdjust="spacingAndGlyphs">1</text>
<text x="606.21" y="323" fill="#000" stroke="#000" stroke-width="0.220" textLength="7.31" lengthAdjust="spacingAndGlyphs">2</text>
<text x="654.36" y="323" fill="#000" stroke="#000" stroke-width="0.220" textLength="20.67" lengthAdjust="spacingAndGlyphs">$60</text>
<text x="711.05" y="323" fill="#000" stroke="#000" stroke-width="0.220" textLength="27.97" lengthAdjust="spacingAndGlyphs">$120</text>
<text x="57.59" y="343" fill="#000" stroke="#000" stroke-width="0.220" textLength="6.45" lengthAdjust="spacingAndGlyphs">4</text>
<text x="68.78" y="343" fill="#000" stroke="#000" stroke-width="0.220" textLength="76.03" lengthAdjust="spacingAndGlyphs">Usman Khan</text>
<text x="188.56" y="343" fill="#000" stroke="#000" stroke-width="0.220" textLength="54.35" lengthAdjust="spacingAndGlyphs">J4321056</text>
<text x="268.34" y="343" fill="#000" stroke="#000" stroke-width="0.220" textLength="72.38" lengthAdjust="spacingAndGlyphs">987-612-345</text>
<text x="377.74" y="343" fill="#000" stroke="#000" stroke-width="0.220" textLength="53.97" lengthAdjust="spacingAndGlyphs">1/2/2025</text>
<text x="456.37" y="343" fill="#000" stroke="#000" stroke-width="0.220" textLength="53.87" lengthAdjust="spacingAndGlyphs">1/3/2025</text>
<text x="516.30" y="343" fill="#000" stroke="#000" stroke-width="0.220" textLength="5.81" lengthAdjust="spacingAndGlyphs">1</text>
<text x="606.61" y="343" fill="#000" stroke="#000" stroke-width="0.220" textLength="6.18" lengthAdjust="spacingAndGlyphs">1</text>
<text x="654.36" y="343" fill="#000" stroke="#000" stroke-width="0.220" textLength="20.67" lengthAdjust="spacingAndGlyphs">$50</text>
<text x="718.21" y="343" fill="#000" stroke="#000" stroke-width="0.220" textLength="20.71" lengthAdjust="spacingAndGlyphs">$50</text>
<text x="56.97" y="363" fill="#000" stroke="#000" stroke-width="0.220" textLength="7.29" lengthAdjust="spacingAndGlyphs">5</text>
<text x="68.86" y="363" fill="#000" stroke="#000" stroke-width="0.220" textLength="93.20" lengthAdjust="spacingAndGlyphs">Darwin Rhodes</text>
<text x="188.48" y="363" fill="#000" stroke="#000" stroke-width="0.220" textLength="58.02" lengthAdjust="spacingAndGlyphs">G6789543</text>
<text x="268.29" y="363" fill="#000" stroke="#000" stroke-width="0.220" textLength="72.41" lengthAdjust="spacingAndGlyphs">543-219-876</text>
<text x="377.74" y="363" fill="#000" stroke="#000" stroke-width="0.220" textLength="53.97" lengthAdjust="spacingAndGlyphs">1/3/2025</text>
<text x="456.37" y="363" fill="#000" stroke="#000" stroke-width="0.220" textLength="53.87" lengthAdjust="spacingAndGlyphs">1/5/2025</text>
<text x="516.08" y="363" fill="#000" stroke="#000" stroke-width="0.220" textLength="6.94" lengthAdjust="spacingAndGlyphs">2</text>
<text x="605.91" y="363" fill="#000" stroke="#000" stroke-width="0.220" textLength="7.62" lengthAdjust="spacingAndGlyphs">3</text>
<text x="654.36" y="363" fill="#000" stroke="#000" stroke-width="0.220" textLength="20.67" lengthAdjust="spacingAndGlyphs">$60</text>
<text x="711.05" y="363" fill="#000" stroke="#000" stroke-width="0.220" textLength="27.97" lengthAdjust="spacingAndGlyphs">$360</text>
<text x="56.89" y="383" fill="#000" stroke="#000" stroke-width="0.220" textLength="7.39" lengthAdjust="spacingAndGlyphs">6</text>
<text x="68.98" y="383" fill="#000" stroke="#000" stroke-width="0.220" textLength="95.96" lengthAdjust="spacingAndGlyphs">Gavin Brookson</text>
<text x="188.60" y="383" fill="#000" stroke="#000" stroke-width="0.220" textLength="58.48" lengthAdjust="spacingAndGlyphs">D8765432</text>
<text x="268.34" y="383" fill="#000" stroke="#000" stroke-width="0.220" textLength="72.36" lengthAdjust="spacingAndGlyphs">678-912-345</text>
<text x="377.74" y="383" fill="#000" stroke="#000" stroke-width="0.220" textLength="53.97" lengthAdjust="spacingAndGlyphs">1/3/2025</text>
<text x="456.37" y="383" fill="#000" stroke="#000" stroke-width="0.220" textLength="53.87" lengthAdjust="spacingAndGlyphs">1/4/2025</text>
<text x="516.30" y="383" fill="#000" stroke="#000" stroke-width="0.220" textLength="5.81" lengthAdjust="spacingAndGlyphs">1</text>
<text x="606.61" y="383" fill="#000" stroke="#000" stroke-width="0.220" textLength="6.18" lengthAdjust="spacingAndGlyphs">1</text>
<text x="654.36" y="383" fill="#000" stroke="#000" stroke-width="0.220" textLength="20.67" lengthAdjust="spacingAndGlyphs">$80</text>
<text x="718.21" y="383" fill="#000" stroke="#000" stroke-width="0.220" textLength="20.71" lengthAdjust="spacingAndGlyphs">$80</text>
<text x="56.97" y="403" fill="#000" stroke="#000" stroke-width="0.220" textLength="7.38" lengthAdjust="spacingAndGlyphs">7</text>
<text x="68.86" y="403" fill="#000" stroke="#000" stroke-width="0.220" textLength="81.00" lengthAdjust="spacingAndGlyphs">Elise Navarro</text>
<text x="188.56" y="403" fill="#000" stroke="#000" stroke-width="0.220" textLength="53.35" lengthAdjust="spacingAndGlyphs">I1234598</text>
<text x="268.29" y="403" fill="#000" stroke="#000" stroke-width="0.220" textLength="72.36" lengthAdjust="spacingAndGlyphs">543-216-789</text>
<text x="377.74" y="403" fill="#000" stroke="#000" stroke-width="0.220" textLength="53.97" lengthAdjust="spacingAndGlyphs">1/4/2025</text>
<text x="456.37" y="403" fill="#000" stroke="#000" stroke-width="0.220" textLength="53.87" lengthAdjust="spacingAndGlyphs">1/7/2025</text>
<text x="515.81" y="403" fill="#000" stroke="#000" stroke-width="0.220" textLength="7.01" lengthAdjust="spacingAndGlyphs">3</text>
<text x="606.61" y="403" fill="#000" stroke="#000" stroke-width="0.220" textLength="6.18" lengthAdjust="spacingAndGlyphs">1</text>
<text x="654.36" y="403" fill="#000" stroke="#000" stroke-width="0.220" textLength="20.67" lengthAdjust="spacingAndGlyphs">$50</text>
<text x="711.05" y="403" fill="#000" stroke="#000" stroke-width="0.220" textLength="27.97" lengthAdjust="spacingAndGlyphs">$150</text>
<text x="57.12" y="423" fill="#000" stroke="#000" stroke-width="0.220" textLength="7.05" lengthAdjust="spacingAndGlyphs">8</text>
<text x="69.69" y="423" fill="#000" stroke="#000" stroke-width="0.220" textLength="101.30" lengthAdjust="spacingAndGlyphs">Adrian Adamson</text>
<text x="188.64" y="423" fill="#000" stroke="#000" stroke-width="0.220" textLength="55.17" lengthAdjust="spacingAndGlyphs">L5432167</text>
<text x="268.32" y="423" fill="#000" stroke="#000" stroke-width="0.220" textLength="72.47" lengthAdjust="spacingAndGlyphs">678-954-321</text>
<text x="377.74" y="423" fill="#000" stroke="#000" stroke-width="0.220" textLength="53.97" lengthAdjust="spacingAndGlyphs">1/4/2025</text>
<text x="456.37" y="423" fill="#000" stroke="#000" stroke-width="0.220" textLength="53.87" lengthAdjust="spacingAndGlyphs">1/6/2025</text>
<text x="516.08" y="423" fill="#000" stroke="#000" stroke-width="0.220" textLength="6.94" lengthAdjust="spacingAndGlyphs">2</text>
<text x="606.21" y="423" fill="#000" stroke="#000" stroke-width="0.220" textLength="7.31" lengthAdjust="spacingAndGlyphs">2</text>
<text x="654.36" y="423" fill="#000" stroke="#000" stroke-width="0.220" textLength="20.67" lengthAdjust="spacingAndGlyphs">$80</text>
<text x="711.05" y="423" fill="#000" stroke="#000" stroke-width="0.220" textLength="27.97" lengthAdjust="spacingAndGlyphs">$320</text>
<text x="57.00" y="443" fill="#000" stroke="#000" stroke-width="0.220" textLength="7.24" lengthAdjust="spacingAndGlyphs">9</text>
<text x="69.49" y="443" fill="#000" stroke="#000" stroke-width="0.220" textLength="76.11" lengthAdjust="spacingAndGlyphs">Thea Deeley</text>
<text x="188.77" y="443" fill="#000" stroke="#000" stroke-width="0.220" textLength="57.20" lengthAdjust="spacingAndGlyphs">A9876123</text>
<text x="268.33" y="443" fill="#000" stroke="#000" stroke-width="0.220" textLength="72.36" lengthAdjust="spacingAndGlyphs">876-543-210</text>
<text x="377.74" y="443" fill="#000" stroke="#000" stroke-width="0.220" textLength="53.97" lengthAdjust="spacingAndGlyphs">1/4/2025</text>
<text x="456.37" y="443" fill="#000" stroke="#000" stroke-width="0.220" textLength="53.87" lengthAdjust="spacingAndGlyphs">1/5/2025</text>
<text x="516.30" y="443" fill="#000" stroke="#000" stroke-width="0.220" textLength="5.81" lengthAdjust="spacingAndGlyphs">1</text>
<text x="606.61" y="443" fill="#000" stroke="#000" stroke-width="0.220" textLength="6.18" lengthAdjust="spacingAndGlyphs">1</text>
<text x="654.36" y="443" fill="#000" stroke="#000" stroke-width="0.220" textLength="20.67" lengthAdjust="spacingAndGlyphs">$50</text>
<text x="718.21" y="443" fill="#000" stroke="#000" stroke-width="0.220" textLength="20.71" lengthAdjust="spacingAndGlyphs">$50</text>
<text x="49.77" y="463" fill="#000" stroke="#000" stroke-width="0.220" textLength="14.38" lengthAdjust="spacingAndGlyphs">10</text>
<text x="68.98" y="463" fill="#000" stroke="#000" stroke-width="0.220" textLength="75.74" lengthAdjust="spacingAndGlyphs">Callie Edwin</text>
<text x="188.78" y="463" fill="#000" stroke="#000" stroke-width="0.220" textLength="56.73" lengthAdjust="spacingAndGlyphs">B6789123</text>
<text x="268.79" y="463" fill="#000" stroke="#000" stroke-width="0.220" textLength="72.04" lengthAdjust="spacingAndGlyphs">432-108-765</text>
<text x="377.74" y="463" fill="#000" stroke="#000" stroke-width="0.220" textLength="53.97" lengthAdjust="spacingAndGlyphs">1/5/2025</text>
<text x="456.37" y="463" fill="#000" stroke="#000" stroke-width="0.220" textLength="53.87" lengthAdjust="spacingAndGlyphs">1/6/2025</text>
<text x="516.30" y="463" fill="#000" stroke="#000" stroke-width="0.220" textLength="5.81" lengthAdjust="spacingAndGlyphs">1</text>
<text x="606.61" y="463" fill="#000" stroke="#000" stroke-width="0.220" textLength="6.18" lengthAdjust="spacingAndGlyphs">1</text>
<text x="654.36" y="463" fill="#000" stroke="#000" stroke-width="0.220" textLength="20.67" lengthAdjust="spacingAndGlyphs">$80</text>
<text x="718.21" y="463" fill="#000" stroke="#000" stroke-width="0.220" textLength="20.71" lengthAdjust="spacingAndGlyphs">$80</text>
<text x="49.68" y="483" fill="#000" stroke="#000" stroke-width="0.220" textLength="14.54" lengthAdjust="spacingAndGlyphs">11</text>
<text x="68.98" y="483" fill="#000" stroke="#000" stroke-width="0.220" textLength="102.67" lengthAdjust="spacingAndGlyphs">Gianna Giordano</text>
<text x="188.74" y="483" fill="#000" stroke="#000" stroke-width="0.220" textLength="56.67" lengthAdjust="spacingAndGlyphs">F6789012</text>
<text x="268.79" y="483" fill="#000" stroke="#000" stroke-width="0.220" textLength="71.99" lengthAdjust="spacingAndGlyphs">432-105-678</text>
<text x="377.74" y="483" fill="#000" stroke="#000" stroke-width="0.220" textLength="53.97" lengthAdjust="spacingAndGlyphs">1/6/2025</text>
<text x="456.37" y="483" fill="#000" stroke="#000" stroke-width="0.220" textLength="53.87" lengthAdjust="spacingAndGlyphs">1/8/2025</text>
<text x="516.08" y="483" fill="#000" stroke="#000" stroke-width="0.220" textLength="6.94" lengthAdjust="spacingAndGlyphs">2</text>
<text x="606.61" y="483" fill="#000" stroke="#000" stroke-width="0.220" textLength="6.18" lengthAdjust="spacingAndGlyphs">1</text>
<text x="654.36" y="483" fill="#000" stroke="#000" stroke-width="0.220" textLength="20.67" lengthAdjust="spacingAndGlyphs">$50</text>
<text x="711.05" y="483" fill="#000" stroke="#000" stroke-width="0.220" textLength="27.97" lengthAdjust="spacingAndGlyphs">$100</text>
<text x="49.71" y="503" fill="#000" stroke="#000" stroke-width="0.220" textLength="14.64" lengthAdjust="spacingAndGlyphs">12</text>
<text x="68.74" y="503" fill="#000" stroke="#000" stroke-width="0.220" textLength="74.19" lengthAdjust="spacingAndGlyphs">Dhruv Singh</text>
<text x="188.80" y="503" fill="#000" stroke="#000" stroke-width="0.220" textLength="56.69" lengthAdjust="spacingAndGlyphs">C4321087</text>
<text x="268.34" y="503" fill="#000" stroke="#000" stroke-width="0.220" textLength="72.20" lengthAdjust="spacingAndGlyphs">876-501-234</text>
<text x="377.74" y="503" fill="#000" stroke="#000" stroke-width="0.220" textLength="53.97" lengthAdjust="spacingAndGlyphs">1/6/2025</text>
<text x="456.37" y="503" fill="#000" stroke="#000" stroke-width="0.220" textLength="53.87" lengthAdjust="spacingAndGlyphs">1/8/2025</text>
<text x="516.08" y="503" fill="#000" stroke="#000" stroke-width="0.220" textLength="6.94" lengthAdjust="spacingAndGlyphs">2</text>
<text x="606.61" y="503" fill="#000" stroke="#000" stroke-width="0.220" textLength="6.18" lengthAdjust="spacingAndGlyphs">1</text>
<text x="654.36" y="503" fill="#000" stroke="#000" stroke-width="0.220" textLength="20.67" lengthAdjust="spacingAndGlyphs">$50</text>
<text x="711.05" y="503" fill="#000" stroke="#000" stroke-width="0.220" textLength="27.97" lengthAdjust="spacingAndGlyphs">$100</text>
<text x="36.47" y="240" fill="#fff" font-weight="bold" textLength="27.74" lengthAdjust="spacingAndGlyphs">S.no</text>
<text x="68.96" y="240" fill="#fff" font-weight="bold" textLength="100.34" lengthAdjust="spacingAndGlyphs">Customer Name</text>
<text x="188.84" y="240" fill="#fff" font-weight="bold" textLength="13.29" lengthAdjust="spacingAndGlyphs">ID</text>
<text x="268.30" y="240" fill="#fff" font-weight="bold" textLength="46.58" lengthAdjust="spacingAndGlyphs">Contact</text>
<text x="358.18" y="230" fill="#fff" font-weight="bold" textLength="50.59" lengthAdjust="spacingAndGlyphs">Booking</text>
<text x="358.08" y="250" fill="#fff" font-weight="bold" textLength="28.84" lengthAdjust="spacingAndGlyphs">Date</text>
<text x="437.30" y="230" fill="#fff" font-weight="bold" textLength="62.95" lengthAdjust="spacingAndGlyphs">Check Out</text>
<text x="436.84" y="250" fill="#fff" font-weight="bold" textLength="28.94" lengthAdjust="spacingAndGlyphs">Date</text>
<text x="516.95" y="230" fill="#fff" font-weight="bold" textLength="30.43" lengthAdjust="spacingAndGlyphs">Total</text>
<text x="516.30" y="250" fill="#fff" font-weight="bold" textLength="29.19" lengthAdjust="spacingAndGlyphs">Days</text>
<text x="567.08" y="230" fill="#fff" font-weight="bold" textLength="37.15" lengthAdjust="spacingAndGlyphs">No. of</text>
<text x="567.20" y="250" fill="#fff" font-weight="bold" textLength="41.68" lengthAdjust="spacingAndGlyphs">Rooms</text>
<text x="617.65" y="220" fill="#fff" font-weight="bold" textLength="36.07" lengthAdjust="spacingAndGlyphs">Room</text>
<text x="617.70" y="240" fill="#fff" font-weight="bold" textLength="32.80" lengthAdjust="spacingAndGlyphs">Rent/</text>
<text x="617.62" y="260" fill="#fff" font-weight="bold" textLength="22.53" lengthAdjust="spacingAndGlyphs">Day</text>
<text x="680.94" y="230" fill="#fff" font-weight="bold" textLength="30.08" lengthAdjust="spacingAndGlyphs">Total</text>
<text x="680.15" y="250" fill="#fff" font-weight="bold" textLength="28.56" lengthAdjust="spacingAndGlyphs">Rent</text>
<text x="69.04" y="547" fill="#fff" font-weight="bold" textLength="69.09" lengthAdjust="spacingAndGlyphs">Room Type</text>
<text x="189.06" y="547" fill="#fff" font-weight="bold" textLength="27.42" lengthAdjust="spacingAndGlyphs">Rate</text>
<text x="69.08" y="570" fill="#000" font-weight="bold" textLength="54.85" lengthAdjust="spacingAndGlyphs">Standard</text>
<text x="145.08" y="590" fill="#000" stroke="#000" stroke-width="0.220" textLength="38.69" lengthAdjust="spacingAndGlyphs">Single</text>
<text x="138.57" y="610" fill="#000" stroke="#000" stroke-width="0.220" textLength="45.12" lengthAdjust="spacingAndGlyphs">Double</text>
<text x="68.84" y="630" fill="#000" font-weight="bold" textLength="43.88" lengthAdjust="spacingAndGlyphs">Deluxe</text>
<text x="242.42" y="590" fill="#000" stroke="#000" stroke-width="0.220" textLength="20.55" lengthAdjust="spacingAndGlyphs">$50</text>
<text x="242.42" y="610" fill="#000" stroke="#000" stroke-width="0.220" textLength="20.55" lengthAdjust="spacingAndGlyphs">$60</text>
<text x="242.42" y="630" fill="#000" stroke="#000" stroke-width="0.220" textLength="20.55" lengthAdjust="spacingAndGlyphs">$80</text>
</svg>
</body></html>
